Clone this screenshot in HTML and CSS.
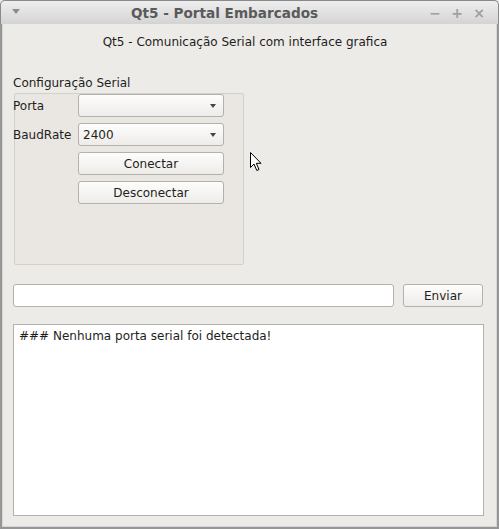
FILE: index.html
```html
<!DOCTYPE html>
<html lang="pt">
<head>
    <meta charset="UTF-8">
    <title>Qt5 - Portal Embarcados</title>
    <link rel="stylesheet" href="styles.css">
</head>
<body>

    <div class="window">
        <div class="titlebar">
            <div class="menu-btn"><span class="tri"></span></div>
            <div class="title">Qt5 - Portal Embarcados</div>
            <div class="win-controls">
                <span class="ctl">&minus;</span>
                <span class="ctl">+</span>
                <span class="ctl">&times;</span>
            </div>
        </div>

        <div class="content">
            <div class="subtitle">Qt5 - Comunicação Serial com interface grafica</div>

            <div class="group-title">Configuração Serial</div>
            <div class="group-box">
                <div class="form">
                    <label class="lbl">Porta</label>
                    <div class="combo"><span class="combo-text"></span><span class="arrow"></span></div>

                    <label class="lbl">BaudRate</label>
                    <div class="combo"><span class="combo-text">2400</span><span class="arrow"></span></div>

                    <span></span>
                    <button class="btn">Conectar</button>

                    <span></span>
                    <button class="btn">Desconectar</button>
                </div>

                <!-- mouse pointer left over the window -->
                <svg class="pointer" width="13" height="20" viewBox="0 0 13 20">
                    <path d="M0.5 0.5 L0.5 15.5 L4 12 L6.8 18.5 L9 17.5 L6.3 11.3 L11 11.3 Z" fill="#fff" stroke="#000" stroke-width="1" stroke-linejoin="miter"/>
                </svg>
            </div>

            <div class="send-row">
                <input type="text" class="line-edit">
                <button class="btn send-btn">Enviar</button>
            </div>

            <textarea class="log" readonly>### Nenhuma porta serial foi detectada!</textarea>
        </div>
    </div>

</body>
</html>
```

FILE: styles.css
```css
:root {
    --bg: #edebe7;
    --frame: #969696;
    --text: #1e1e1e;
    --widget-border: #b4b1ac;
}

* {
    margin: 0;
    padding: 0;
    box-sizing: border-box;
}

body {
    font-family: "DejaVu Sans", sans-serif;
    font-size: 12px;
    color: var(--text);
    background: #fff;
}

.window {
    width: 499px;
    height: 529px;
    display: flex;
    flex-direction: column;
    background: var(--bg);
}

/* title bar */
.titlebar {
    height: 24px;
    display: flex;
    align-items: center;
    border: 1px solid #8a8a8a;
    border-bottom: none;
    border-radius: 5px 5px 0 0;
    background: linear-gradient(#eeeeee, #d4d4d4);
}

.menu-btn {
    width: 30px;
    padding-left: 11px;
    display: flex;
    align-items: center;
}

.tri {
    width: 0;
    height: 0;
    border-left: 4.5px solid transparent;
    border-right: 4.5px solid transparent;
    border-top: 5px solid #8c8c8c;
    margin-top: -2px;
}

.title {
    flex: 1;
    text-align: center;
    font-weight: bold;
    font-size: 13.6px;
    color: #5a5a5a;
    padding: 1px 6px 0 0;
}

.win-controls {
    width: 74px;
    display: flex;
    gap: 8px;
    padding-right: 12px;
    justify-content: flex-end;
}

.ctl {
    width: 14px;
    text-align: center;
    font-weight: bold;
    font-size: 14px;
    color: #a0a0a0;
    line-height: 14px;
}

/* main area */
.content {
    flex: 1;
    display: flex;
    flex-direction: column;
    border: 2px solid var(--frame);
    border-top: none;
    padding: 0 13px 11px 11px;
    box-shadow: inset 1px 0 0 #d6d6d6, inset -1px -1px 0 #d6d6d6;
}

.subtitle {
    margin-top: 11px;
    line-height: 15px;
    text-align: center;
    padding-right: 7px;
}

.group-title {
    margin-top: 26px;
    line-height: 15px;
}

.group-box {
    position: relative;
    margin-top: 2px;
    margin-left: 1px;
    width: 230px;
    height: 172px;
    border: 1px solid #d3cfca;
    border-radius: 2px;
    background: #eae7e3;
}

.form {
    margin-left: -2px;
    display: grid;
    grid-template-columns: 65px 146px;
    grid-auto-rows: 23px;
    row-gap: 6px;
}

.lbl {
    display: flex;
    align-items: center;
}

.combo,
.btn {
    height: 23px;
    border: 1px solid var(--widget-border);
    border-radius: 3px;
    background: linear-gradient(#fdfdfc, #eeece9);
    font-family: inherit;
    font-size: 12px;
    color: var(--text);
}

.combo {
    display: flex;
    align-items: center;
    padding: 0 7px 0 4px;
}

.combo-text {
    flex: 1;
}

.arrow {
    width: 0;
    height: 0;
    border-left: 3.5px solid transparent;
    border-right: 3.5px solid transparent;
    border-top: 4px solid #454545;
}

.pointer {
    position: absolute;
    left: 235px;
    top: 58px;
}

.send-row {
    margin-top: 19px;
    display: flex;
    gap: 9px;
    padding-right: 1px;
}

.line-edit {
    flex: 1;
    height: 23px;
    border: 1px solid var(--widget-border);
    border-radius: 3px;
    background: #fff;
    font-family: inherit;
    font-size: 12px;
}

.send-btn {
    width: 80px;
}

.log {
    margin-top: 17px;
    height: 192px;
    border: 1px solid var(--widget-border);
    background: #fff;
    resize: none;
    padding: 4px 5px;
    font-family: inherit;
    font-size: 12px;
    line-height: 15px;
    color: var(--text);
    overflow: hidden;
}
```
